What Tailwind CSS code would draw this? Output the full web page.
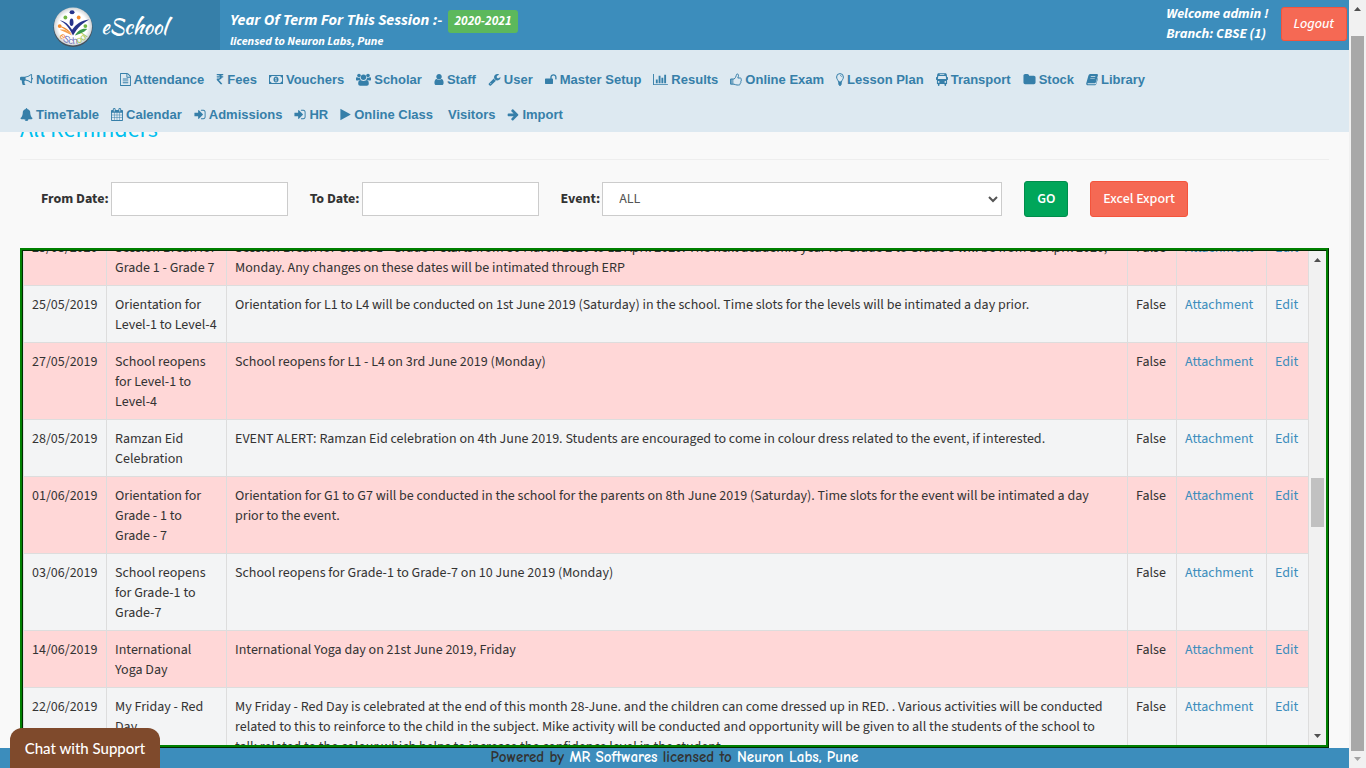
<!DOCTYPE html>
<html lang="en">
<head>
    <meta charset="UTF-8">
    <meta name="viewport" content="width=device-width, initial-scale=1.0">
    <title>eSchool - All Reminders</title>
    <script src="https://cdn.jsdelivr.net/npm/@tailwindcss/browser@4"></script>
</head>
<body class="flex h-screen overflow-hidden bg-[#f9f9f9] font-['Source_Sans_Pro','Source_Sans_3','Noto_Sans_CJK_SC',sans-serif] text-[14px] leading-5 text-[#333]">
    <div class="flex min-w-0 flex-1 flex-col">
        <!-- Top bar -->
        <header class="flex h-[50px] shrink-0 bg-[#3c8dbc] font-bold text-white italic">
            <a href="#" class="flex w-[220px] shrink-0 items-center justify-center gap-2 bg-[#367fa9] pt-1">
                <svg class="size-10" viewBox="0 0 42 42" aria-hidden="true">
                    <defs>
                        <radialGradient id="disc"><stop offset=".75" stop-color="#fff"/><stop offset="1" stop-color="#cfd3d6"/></radialGradient>
                        <path id="arc" d="M4.500 26c2 8 9 13 17 13s15-5 17-13"/>
                    </defs>
                    <circle cx="21" cy="21.500" r="20.500" fill="#47525c"/>
                    <circle cx="21" cy="20.500" r="20" fill="url(#disc)"/>
                    <path d="M6 20c5 0 11 4 14 9-6-5-10-7-14-9z" fill="#f58b2a"/>
                    <path d="M7 24c5-1 9 1 13 6-5-3-9-4-13-6z" fill="#f5a04a"/>
                    <path d="M36 23c-6-1-10 2-13 7 5-2 9-3 13-7z" fill="#3c9a4c"/>
                    <path d="M7 14c6 1 10 5 13 10 4-6 9-10 18-11-7 4-12 8-17 17C17 22 13 17 7 14z" fill="#27348b"/>
                    <ellipse cx="20" cy="5.500" rx="2.600" ry="2" fill="#27348b"/>
                    <ellipse cx="19.500" cy="16" rx="2" ry="4" fill="#27348b"/>
                    <circle cx="13" cy="11" r="2" fill="#6fb543"/>
                    <circle cx="27" cy="11" r="2" fill="#f58b2a"/>
                    <circle cx="7" cy="20" r="2" fill="#f58b2a"/>
                    <circle cx="34" cy="20" r="2" fill="#6fb543"/>
                    <text font-size="10" font-family="Liberation Sans" font-weight="normal" font-style="normal" fill="#6b72b8"><textPath href="#arc" startOffset="5"><tspan fill="#f58b2a">e</tspan>Sch<tspan fill="#a9c94f">ool</tspan></textPath></text>
                </svg>
                <span class="font-['Kaushan_Script',cursive] text-[21px] font-normal not-italic">eSchool</span>
            </a>
            <div class="flex flex-1 items-start justify-between pl-[10px]">
                <div class="pt-[10px]">
                    <div class="flex items-start gap-[6px] text-[16px] leading-5">
                        <span>Year Of Term For This Session :-</span>
                        <span class="rounded-[3px] bg-[#5cb85c] px-[6px] text-[13px] leading-[23px]">2020-2021</span>
                    </div>
                    <div class="text-[12px] leading-[18px]">licensed to Neuron Labs, Pune</div>
                </div>
                <div class="flex gap-3 pr-[2px]">
                    <div class="pt-1">
                        <div>Welcome admin !</div>
                        <div>Branch: CBSE (1)</div>
                    </div>
                    <button type="button" class="mt-[7px] h-[34px] rounded-[3px] border border-[#f4543c] bg-[#f56954] px-3 font-medium italic">Logout</button>
                </div>
            </div>
        </header>

        <!-- Menu -->
        <nav class="z-10 shrink-0 bg-[#dde9f1] px-5 pt-3 font-['Liberation_Sans',Arial,sans-serif] text-[13px] leading-[35px] font-bold text-[#367fa9]">
            <div class="flex gap-3 whitespace-nowrap">
                <a href="#" class="flex items-center gap-[3px]"><svg class="size-[13px]" viewBox="0 0 1792 1792" fill="currentColor"><path d="M1664 640q53 0 90.500 37.500t37.500 90.500-37.500 90.500-90.500 37.500v384q0 52-38 90t-90 38q-417-347-812-380-58 19-91 66t-31 100.500 40 92.500q-20 33-23 65.500t6 58 33.500 55 48 50 61.500 50.500q-29 58-111.500 83t-168.500 11.500-132-55.500q-7-23-29.500-87.500t-32-94.500-23-89-15-101 3.500-98.500 22-110.500h-122q-66 0-113-47t-47-113v-192q0-66 47-113t113-47h480q435 0 896-384 52 0 90 38t38 90v384zm-128 604v-954q-394 302-768 343v270q377 42 768 341z"/></svg>Notification</a>
                <a href="#" class="flex items-center gap-[3px]"><svg class="h-[13px] w-[11px]" viewBox="128 0 1536 1792" fill="currentColor"><path d="M1596 380q28 28 48 76t20 88v1152q0 40-28 68t-68 28h-1344q-40 0-68-28t-28-68v-1600q0-40 28-68t68-28h896q40 0 88 20t76 48zm-444-244v376h376q-10-29-22-41l-313-313q-12-12-41-22zm384 1528v-1024h-416q-40 0-68-28t-28-68v-416h-768v1536h1280zm-1024-864q0-14 9-23t23-9h704q14 0 23 9t9 23v64q0 14-9 23t-23 9h-704q-14 0-23-9t-9-23v-64zm736 224q14 0 23 9t9 23v64q0 14-9 23t-23 9h-704q-14 0-23-9t-9-23v-64q0-14 9-23t23-9h704zm0 256q14 0 23 9t9 23v64q0 14-9 23t-23 9h-704q-14 0-23-9t-9-23v-64q0-14 9-23t23-9h704z"/></svg>Attendance</a>
                <a href="#" class="flex items-center gap-[3px]"><svg class="h-[13px] w-[8px]" viewBox="400 0 992 1792" fill="currentColor"><path d="M1345 470v102q0 14-9 23t-23 9h-168q-23 144-129 234t-276 110q167 178 459 536 14 16 4 34-8 18-29 18h-195q-16 0-25-12-306-367-498-571-9-9-9-22v-127q0-13 9.500-22.500t22.500-9.500h112q132 0 212.500-43t102.500-125h-427q-14 0-23-9t-9-23v-102q0-14 9-23t23-9h413q-57-113-268-113h-145q-13 0-22.500-9.500t-9.500-22.500v-133q0-14 9-23t23-9h832q14 0 23 9t9 23v102q0 14-9 23t-23 9h-233q47 61 64 144h171q14 0 23 9t9 23z"/></svg>Fees</a>
                <a href="#" class="flex items-center gap-[3px]"><svg class="h-[13px] w-[14px]" viewBox="0 0 14 13" fill="currentColor"><path fill-rule="evenodd" d="M0 2h14v9H0zM2.500 3A1.500 1.500 0 0 1 1 4.500v4A1.500 1.500 0 0 1 2.500 10h9A1.500 1.500 0 0 1 13 8.500v-4A1.500 1.500 0 0 1 11.500 3z"/><path fill-rule="evenodd" d="M7 3.500c1.600 0 2.500 1.400 2.500 3s-.9 3-2.500 3-2.500-1.400-2.500-3 .9-3 2.500-3zM6 5.500l.4.500.2-.2V7.700H6v.6h2v-.6h-.6V4.700h-.6z"/></svg>Vouchers</a>
                <a href="#" class="flex items-center gap-[3px]"><svg class="h-[13px] w-[15px]" viewBox="0 0 15 13" fill="currentColor"><circle cx="3" cy="2.500" r="1.800"/><circle cx="12" cy="2.500" r="1.800"/><circle cx="7.500" cy="4.300" r="2.700"/><path d="M0 7V5.300C0 4.300.5 4 1.200 4.200 2.300 4.900 3.300 4.900 4 4.600c0 1 .2 1.800.8 2.400H3.300c-.5 0-.9.200-1.200.600C.8 7.600 0 7.600 0 7zM15 7V5.300c0-1-.5-1.300-1.200-1.100-1.100.7-2.100.7-2.800.4 0 1-.2 1.800-.8 2.400h1.500c.5 0 .9.200 1.200.600 1.300 0 2.100 0 2.100-.6z"/><path d="M2.200 10.800c0-2 .6-3.700 2.300-3.700.5 0 1.200 1 3 1s2.500-1 3-1c1.700 0 2.300 1.700 2.300 3.700 0 1.300-.8 2-1.900 2H4.100c-1.100 0-1.900-.7-1.900-2z"/></svg>Scholar</a>
                <a href="#" class="flex items-center gap-[3px]"><svg class="h-[13px] w-[10px]" viewBox="192 0 1400 1792" fill="currentColor"><path d="M1536 1399q0 109-62.500 187t-150.500 78h-854q-88 0-150.500-78t-62.500-187q0-85 8.500-160.500t31.500-152 58.500-131 94-89 134.500-34.500q131 128 313 128t313-128q76 0 134.500 34.500t94 89 58.500 131 31.500 152 8.500 160.500zm-256-887q0 159-112.500 271.500t-271.500 112.500-271.500-112.500-112.500-271.500 112.500-271.500 271.500-112.500 271.500 112.500 112.500 271.500z"/></svg>Staff</a>
                <a href="#" class="flex items-center gap-[3px]"><svg class="size-[13px]" viewBox="0 0 1792 1792" fill="currentColor"><path d="M448 1472q0-26-19-45t-45-19-45 19-19 45 19 45 45 19 45-19 19-45zm644-420l-682 682q-37 37-90 37-52 0-91-37l-106-108q-38-36-38-90 0-53 38-91l681-681q39 98 114.500 173.500t173.500 114.500zm634-435q0 39-23 106-47 134-164.500 217.500t-258.500 83.500q-185 0-316.500-131.500t-131.500-316.500 131.500-316.500 316.500-131.500q58 0 121.500 16.500t107.500 46.500q16 11 16 28t-16 28l-293 169v224l193 107q5-3 79-48.500t135.500-81 70.500-35.500q15 0 23.500 10t8.500 25z"/></svg>User</a>
                <a href="#" class="flex items-center gap-[3px]"><svg class="h-[13px] w-[12px]" viewBox="64 0 1728 1792" fill="currentColor"><path d="M1728 576v256q0 26-19 45t-45 19h-64q-26 0-45-19t-19-45v-256q0-106-75-181t-181-75-181 75-75 181v192h96q40 0 68 28t28 68v576q0 40-28 68t-68 28h-960q-40 0-68-28t-28-68v-576q0-40 28-68t68-28h672v-192q0-185 131.500-316.500t316.500-131.500 316.500 131.500 131.500 316.500z"/></svg>Master Setup</a>
                <a href="#" class="flex items-center gap-[3px]"><svg class="h-[13px] w-[15px]" viewBox="0 0 2048 1792" fill="currentColor"><path d="M640 896v512h-256v-512h256zm384-512v1024h-256v-1024h256zm1024 1152v128h-2048v-1536h128v1408h1920zm-640-896v768h-256v-768h256zm384-384v1152h-256v-1152h256z"/></svg>Results</a>
                <a href="#" class="flex items-center gap-[3px]"><svg class="h-[13px] w-[12px]" viewBox="0 0 12 13" fill="none" stroke="currentColor"><path d="M3 6h1.200C5 5 6 4.200 6.200 2.800c.1-1 .3-1.800 1.100-1.800 1.300 0 1.400 1.500 1 2.600L7.800 5H10c1.300 0 1.700 1 1.100 1.800.4.800.2 1.400-.3 1.800.2.700 0 1.300-.5 1.700.1 1-.5 1.700-1.600 1.700H7c-1.400 0-2-.7-3-.8H.6V6z"/><path d="M3.500 6v5H1V6z" fill="currentColor" stroke="none" opacity=".6"/></svg>Online Exam</a>
                <a href="#" class="flex items-center gap-[3px]"><svg class="h-[13px] w-[8px]" viewBox="0 0 8 13" fill="none" stroke="currentColor"><path d="M2.600 9C2.400 7.300.6 6.300.6 4A3.400 3.400 0 0 1 7.400 4c0 2.300-1.800 3.300-2 5z"/><path d="M4 2.500c.9 0 1.600.5 1.600 1.300" stroke-width=".8"/><path d="M2.300 9.500h3.400M2.300 11h3.400M3.200 12.300h1.600" stroke-width="1.300"/></svg>Lesson Plan</a>
                <a href="#" class="flex items-center gap-[3px]"><svg class="h-[13px] w-[12px]" viewBox="0 0 13 13" fill="currentColor" preserveAspectRatio="none"><path fill-rule="evenodd" d="M3 .3h7c1.100 0 1.600.6 1.700 1.500L12 4h.4c.3 0 .6.300.6.700v1.600c0 .4-.3.700-.6.700H12v4h-1v1.100a.9.900 0 0 1-1.800 0V11H3.800v1.100a.9.900 0 0 1-1.800 0V11H1V7H.6C.3 7 0 6.700 0 6.300V4.700c0-.4.3-.7.600-.7H1l.3-2.200C1.400.9 1.900.300 3 .300zM4 1.200v.8h5v-.8zM2.500 3L2 6h9l-.5-3zM2.900 8a.9.900 0 1 0 0 1.800.9.900 0 0 0 0-1.800zM10.100 8a.9.900 0 1 0 0 1.800.9.900 0 0 0 0-1.800z"/></svg>Transport</a>
                <a href="#" class="flex items-center gap-[3px]"><svg class="size-[13px]" viewBox="0 0 1792 1792" fill="currentColor"><path d="M1728 608v704q0 92-66 158t-158 66h-1216q-92 0-158-66t-66-158v-960q0-92 66-158t158-66h320q92 0 158 66t66 158v32h672q92 0 158 66t66 158z"/></svg>Stock</a>
                <a href="#" class="flex items-center gap-[3px]"><svg class="h-[13px] w-[12px]" viewBox="0 0 12 13" fill="currentColor"><path fill-rule="evenodd" d="M4.200 1h6.600c.8 0 1.300.700 1.100 1.500L10 9c-.3.900-.8 1.200-1.600 1.200H2.200c-.6 0-.8.3-.6.700.1.300.4.400.8.400h6.700c.4 0 .7-.1.800-.5l1.800-6c.4.4.4.800.2 1.300L10.300 11c-.3.800-.9 1.300-1.700 1.300H2C.9 12.300 0 11.400.200 10.400L2.300 3C2.700 1.800 3.200 1 4.200 1zM4.900 3.200l-.2.700h4.500l.2-.7zM4.400 4.900l-.2.700h4.500l.2-.7z"/></svg>Library</a>
            </div>
            <div class="flex gap-3 whitespace-nowrap">
                <a href="#" class="flex items-center gap-[3px]"><svg class="size-[13px]" viewBox="0 0 1792 1792" fill="currentColor"><path d="M912 1696q0-16-16-16-59 0-101.500-42.500t-42.500-101.500q0-16-16-16t-16 16q0 73 51.500 124.500t124.500 51.500q16 0 16-16zm816-288q0 52-38 90t-90 38h-448q0 106-75 181t-181 75-181-75-75-181h-448q-52 0-90-38t-38-90q50-42 91-88t85-119.500 74.500-158.500 50-206 19.500-260q0-152 117-282.500t307-158.500q-8-19-8-39 0-40 28-68t68-28 68 28 28 68q0 20-8 39 190 28 307 158.500t117 282.500q0 139 19.500 260t50 206 74.500 158.500 85 119.500 91 88z"/></svg>TimeTable</a>
                <a href="#" class="flex items-center gap-[3px]"><svg class="h-[13px] w-[12px]" viewBox="64 0 1664 1792" fill="currentColor"><path d="M192 1664h288v-288h-288v288zm352 0h320v-288h-320v288zm-352-352h288v-320h-288v320zm352 0h320v-320h-320v320zm-352-384h288v-288h-288v288zm736 736h320v-288h-320v288zm-384-736h320v-288h-320v288zm768 736h288v-288h-288v288zm-384-352h320v-320h-320v320zm-352-864v-288q0-13-9.500-22.500t-22.500-9.500h-64q-13 0-22.500 9.500t-9.500 22.500v288q0 13 9.500 22.500t22.500 9.500h64q13 0 22.500-9.500t9.500-22.500zm736 864h288v-320h-288v320zm-384-384h320v-288h-320v288zm384 0h288v-288h-288v288zm32-480v-288q0-13-9.500-22.500t-22.500-9.500h-64q-13 0-22.500 9.500t-9.500 22.500v288q0 13 9.500 22.500t22.500 9.500h64q13 0 22.500-9.500t9.500-22.500zm384-64v1280q0 52-38 90t-90 38h-1408q-52 0-90-38t-38-90v-1280q0-52 38-90t90-38h128v-96q0-66 47-113t113-47h64q66 0 113 47t47 113v96h384v-96q0-66 47-113t113-47h64q66 0 113 47t47 113v96h128q52 0 90 38t38 90z"/></svg>Calendar</a>
                <a href="#" class="flex items-center gap-[3px]"><svg class="h-[13px] w-[12px]" viewBox="128 0 1536 1792" fill="currentColor"><path d="M1312 896q0 26-19 45l-544 544q-19 19-45 19t-45-19-19-45v-288h-448q-26 0-45-19t-19-45v-384q0-26 19-45t45-19h448v-288q0-26 19-45t45-19 45 19l544 544q19 19 19 45zm352-352v704q0 119-84.500 203.500t-203.500 84.500h-320q-13 0-22.500-9.500t-9.500-22.500q0-4-1-20t-.5-26.500 3-23.500 10-19.500 20.500-6.500h320q66 0 113-47t47-113v-704q0-66-47-113t-113-47h-312l-11.500-1-11.500-3-8-5.500-7-9-2-13.500q0-4-1-20t-.5-26.500 3-23.500 10-19.500 20.500-6.500h320q119 0 203.500 84.500t84.500 203.500z"/></svg>Admissions</a>
                <a href="#" class="flex items-center gap-[3px]"><svg class="h-[13px] w-[12px]" viewBox="128 0 1536 1792" fill="currentColor"><path d="M1312 896q0 26-19 45l-544 544q-19 19-45 19t-45-19-19-45v-288h-448q-26 0-45-19t-19-45v-384q0-26 19-45t45-19h448v-288q0-26 19-45t45-19 45 19l544 544q19 19 19 45zm352-352v704q0 119-84.500 203.500t-203.500 84.500h-320q-13 0-22.500-9.500t-9.500-22.500q0-4-1-20t-.5-26.500 3-23.500 10-19.500 20.500-6.500h320q66 0 113-47t47-113v-704q0-66-47-113t-113-47h-312l-11.500-1-11.500-3-8-5.500-7-9-2-13.500q0-4-1-20t-.5-26.500 3-23.500 10-19.500 20.500-6.500h320q119 0 203.500 84.500t84.500 203.500z"/></svg>HR</a>
                <a href="#" class="flex items-center gap-[3px]"><svg class="h-[13px] w-[11px]" viewBox="160 0 1472 1792" fill="currentColor"><path d="M1576 927l-1328 738q-23 13-39.500 3t-16.500-36v-1472q0-26 16.500-36t39.500 3l1328 738q23 13 23 31t-23 31z"/></svg>Online Class</a>
                <a href="#" class="pl-[3px]">Visitors</a>
                <a href="#" class="flex items-center gap-[3px]"><svg class="h-[13px] w-[12px]" viewBox="64 0 1600 1792" fill="currentColor"><path d="M1600 960q0 54-37 91l-651 651q-39 37-91 37-51 0-90-37l-75-75q-38-38-38-91t38-91l293-293h-704q-52 0-84.500-37.500t-32.500-90.500v-128q0-53 32.500-90.500t84.500-37.500h704l-293-294q-38-36-38-90t38-90l75-75q38-38 90-38 53 0 91 38l651 651q37 35 37 90z"/></svg>Import</a>
            </div>
        </nav>

        <!-- Reminders -->
        <main class="flex min-h-0 flex-1 flex-col px-5">
            <h1 class="-mt-[15px] border-b border-[#eee] pb-4 text-[24px] leading-[26px] text-[#00c0ef]">All Reminders</h1>
            <form class="flex items-center gap-[22px] py-[21px] pl-[21px]" onsubmit="return false">
                <div class="flex items-center gap-[2px]">
                    <label for="fromDate" class="font-bold">From Date:</label>
                    <input id="fromDate" type="text" class="h-[34px] w-[177px] border border-[#ccc] bg-white px-3">
                </div>
                <div class="flex items-center gap-[2px]">
                    <label for="toDate" class="font-bold">To Date:</label>
                    <input id="toDate" type="text" class="h-[34px] w-[177px] border border-[#ccc] bg-white px-3">
                </div>
                <div class="flex items-center gap-[2px]">
                    <label for="event" class="font-bold">Event:</label>
                    <select id="event" class="h-[34px] w-[400px] border border-[#ccc] bg-white px-3 text-[#555]">
                        <option>ALL</option>
                    </select>
                </div>
                <button type="submit" class="h-9 rounded-[3px] border border-[#008d4c] bg-[#00a65a] px-3 font-semibold text-white">GO</button>
                <button type="button" class="h-9 rounded-[3px] border border-[#f4543c] bg-[#f56954] px-3 font-medium text-white">Excel Export</button>
            </form>

            <div class="mt-[10px] flex min-h-0 flex-1 border-3 border-[#008000] [border-style:ridge]">
                <div class="min-w-0 flex-1 overflow-hidden">
                    <table class="-mt-[23px] w-full table-fixed border-collapse bg-[#f3f4f5] [&_a]:text-[#3c8dbc] [&_td]:border [&_td]:border-[#ddd] [&_td]:px-2 [&_td]:pt-[9px] [&_td]:pb-[7px] [&_td]:align-top [&_tr:nth-child(odd)]:bg-[#ffd7d7]">
                        <colgroup>
                            <col class="w-[83px]">
                            <col class="w-[120px]">
                            <col>
                            <col class="w-[49px]">
                            <col class="w-[90px]">
                            <col class="w-[42px]">
                        </colgroup>
                        <tbody>
                            <tr>
                                <td>25/03/2020</td>
                                <td>Session Break for Grade 1 - Grade 7</td>
                                <td>Session Break for Grade 1 - Grade 7 starts from 30 March 2020 to 12 April 2020. The next academic year for Grade 2 to Grade 8 will be from 13 April 2020, Monday. Any changes on these dates will be intimated through ERP</td>
                                <td>False</td>
                                <td><a href="#">Attachment</a></td>
                                <td><a href="#">Edit</a></td>
                            </tr>
                            <tr>
                                <td>25/05/2019</td>
                                <td>Orientation for Level-1 to Level-4</td>
                                <td>Orientation for L1 to L4 will be conducted on 1st June 2019 (Saturday) in the school. Time slots for the levels will be intimated a day prior.</td>
                                <td>False</td>
                                <td><a href="#">Attachment</a></td>
                                <td><a href="#">Edit</a></td>
                            </tr>
                            <tr>
                                <td>27/05/2019</td>
                                <td>School reopens for Level-1 to Level-4</td>
                                <td>School reopens for L1 - L4 on 3rd June 2019 (Monday)</td>
                                <td>False</td>
                                <td><a href="#">Attachment</a></td>
                                <td><a href="#">Edit</a></td>
                            </tr>
                            <tr>
                                <td>28/05/2019</td>
                                <td>Ramzan Eid Celebration</td>
                                <td>EVENT ALERT: Ramzan Eid celebration on 4th June 2019. Students are encouraged to come in colour dress related to the event, if interested.</td>
                                <td>False</td>
                                <td><a href="#">Attachment</a></td>
                                <td><a href="#">Edit</a></td>
                            </tr>
                            <tr>
                                <td>01/06/2019</td>
                                <td>Orientation for Grade - 1 to Grade - 7</td>
                                <td>Orientation for G1 to G7 will be conducted in the school for the parents on 8th June 2019 (Saturday). Time slots for the event will be intimated a day prior to the event.</td>
                                <td>False</td>
                                <td><a href="#">Attachment</a></td>
                                <td><a href="#">Edit</a></td>
                            </tr>
                            <tr>
                                <td>03/06/2019</td>
                                <td>School reopens for Grade-1 to Grade-7</td>
                                <td>School reopens for Grade-1 to Grade-7 on 10 June 2019 (Monday)</td>
                                <td>False</td>
                                <td><a href="#">Attachment</a></td>
                                <td><a href="#">Edit</a></td>
                            </tr>
                            <tr>
                                <td>14/06/2019</td>
                                <td>International Yoga Day</td>
                                <td>International Yoga day on 21st June 2019, Friday</td>
                                <td>False</td>
                                <td><a href="#">Attachment</a></td>
                                <td><a href="#">Edit</a></td>
                            </tr>
                            <tr>
                                <td>22/06/2019</td>
                                <td>My Friday - Red Day</td>
                                <td>My Friday - Red Day is celebrated at the end of this month 28-June. and the children can come dressed up in RED. . Various activities will be conducted related to this to reinforce to the child in the subject. Mike activity will be conducted and opportunity will be given to all the students of the school to talk related to the colour which helps to increase the confidence level in the student.</td>
                                <td>False</td>
                                <td><a href="#">Attachment</a></td>
                                <td><a href="#">Edit</a></td>
                            </tr>
                        </tbody>
                    </table>
                </div>
                <!-- Table scrollbar -->
                <div class="flex w-[17px] shrink-0 flex-col items-center justify-between bg-[#f1f1f1] text-[#505050]" aria-hidden="true">
                    <svg class="size-[17px]" viewBox="0 0 17 17" fill="currentColor"><path d="M5 11l3.500-4 3.500 4z"/></svg>
                    <div class="flex w-[13px] flex-1 flex-col">
                        <div class="grow-[210]"></div>
                        <div class="h-[49px] bg-[#c1c1c1]"></div>
                        <div class="grow-[201]"></div>
                    </div>
                    <svg class="size-[17px]" viewBox="0 0 17 17" fill="currentColor"><path d="M5 6l3.500 4L12 6z"/></svg>
                </div>
            </div>
        </main>

        <footer class="h-5 shrink-0 bg-[#3c8dbc] text-center font-['Comic_Sans_MS','Comic_Neue','Comic_Relief','Noto_Sans',sans-serif] text-[15px] leading-[18px] font-bold">
            Powered by <a href="#" class="text-white">MR Softwares</a> licensed to <a href="#" class="text-white">Neuron Labs, Pune</a>
        </footer>
    </div>

    <!-- Page scrollbar -->
    <div class="flex w-[17px] shrink-0 flex-col items-center bg-[#f1f1f1] text-[#505050]" aria-hidden="true">
        <svg class="size-[17px]" viewBox="0 0 17 17" fill="currentColor"><path d="M5 11l3.500-4 3.500 4z"/></svg>
        <div class="flex w-[13px] flex-1 flex-col pt-[19px]">
            <div class="flex-1 bg-[#a8a8a8]"></div>
        </div>
        <svg class="size-[17px] text-[#a3a3a3]" viewBox="0 0 17 17" fill="currentColor"><path d="M5 6l3.500 4L12 6z"/></svg>
    </div>

    <!-- Chat tab -->
    <button type="button" class="fixed bottom-0 left-[10px] z-20 h-10 w-[150px] rounded-t-[12px] bg-[#7f4a2c] font-['Lato',sans-serif] text-[15px] font-medium text-white">Chat with Support</button>
</body>
</html>
